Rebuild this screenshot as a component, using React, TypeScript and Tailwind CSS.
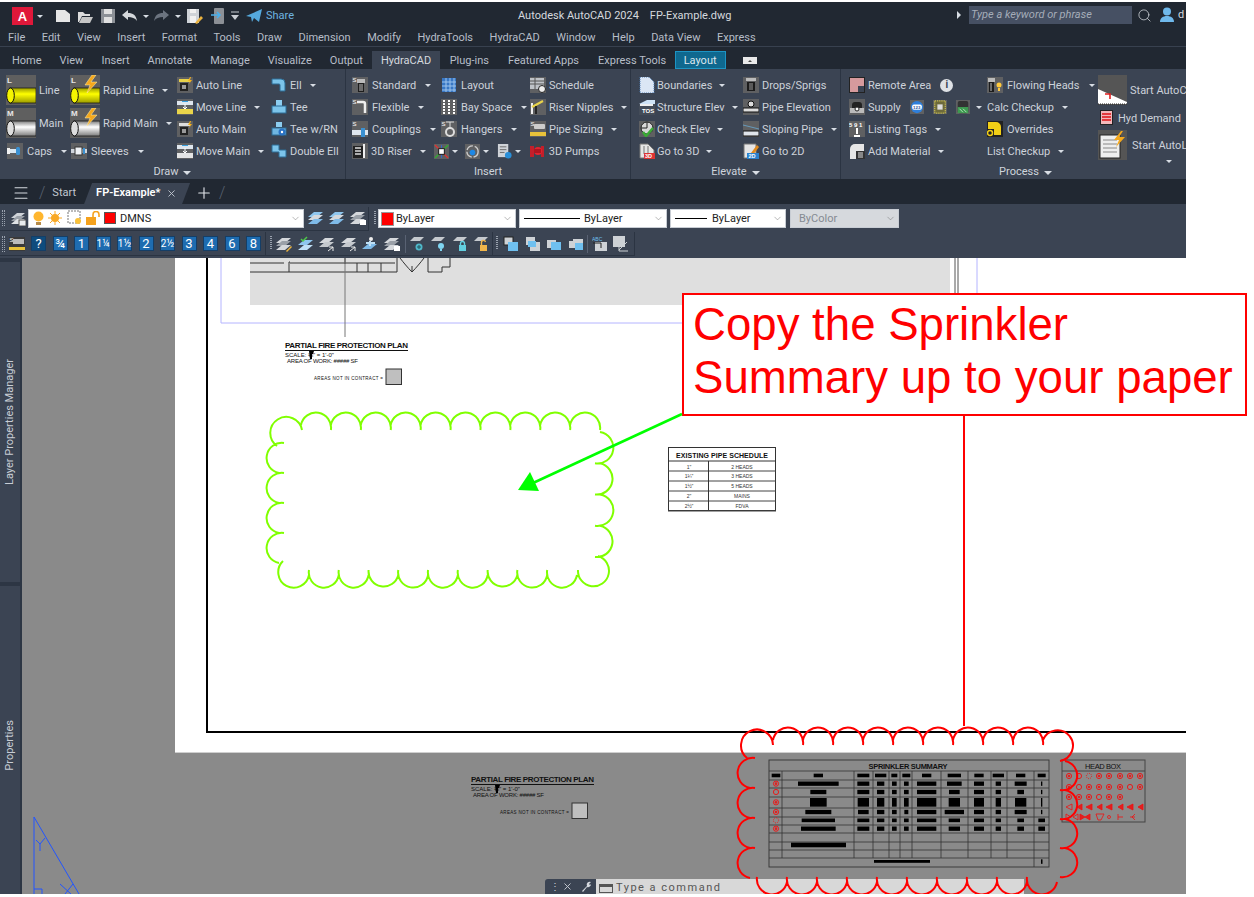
import React from 'react';
import { ChevronDown, Menu, Plus, Search, X } from 'lucide-react';

const G = '#5f6062';

const icons: Record<string, React.ReactNode> = {
  autoLine: (<><rect width="16" height="16" fill={G} /><rect x="2" y="2" width="11" height="3" fill="#e8d24a" /><rect x="3" y="6" width="8" height="8" fill="#222" /><path d="M5 8h4v4H5z" fill="#999" /><path d="M13 0l-2 4h2l-1 3 3-4h-2l1-3z" fill="#f5b21c" /></>),
  autoMain: (<><rect width="16" height="16" fill={G} /><rect x="2" y="2" width="11" height="3" fill="#ddd" /><rect x="3" y="6" width="8" height="8" fill="#222" /><path d="M5 8h4v4H5z" fill="#999" /><path d="M13 0l-2 4h2l-1 3 3-4h-2l1-3z" fill="#f5b21c" /></>),
  moveLine: (<><rect width="16" height="16" fill={G} /><rect x="0" y="2" width="16" height="4" fill="#dfe6ee" /><rect x="0" y="10" width="16" height="5" fill="#e9d44a" /><path d="M5 2h6v1H5z" fill="#38a0e0" /><path d="M8 5v5M6 8l2 2 2-2" stroke="#fff" fill="none" /></>),
  moveMain: (<><rect width="16" height="16" fill={G} /><rect x="0" y="2" width="16" height="4" fill="#dfe6ee" /><rect x="0" y="10" width="16" height="5" fill="#e4e4e4" /><path d="M5 2h6v1H5z" fill="#38a0e0" /><path d="M8 5v5M6 8l2 2 2-2" stroke="#fff" fill="none" /></>),
  ell: (<><path d="M1 2h9a4 4 0 014 4v8H9V8a1 1 0 00-1-1H1z" fill="#7cc4ea" stroke="#2d6d96" /></>),
  tee: (<><rect x="5" y="1" width="6" height="6" fill="#8ccdf0" /><rect x="1" y="7" width="14" height="7" fill="#7cc4ea" stroke="#2d6d96" /></>),
  teeRn: (<><rect x="5" y="1" width="6" height="5" fill="#8ccdf0" /><rect x="1" y="7" width="14" height="7" fill="#6fb6e2" stroke="#2d6d96" /><circle cx="11" cy="11" r="3.5" fill="#2a72c4" /><circle cx="11" cy="11" r="1.2" fill="#fff" /></>),
  doubleEll: (<><path d="M1 2h7v5h7v7H8V9H1z" fill="#7cc4ea" stroke="#2d6d96" /></>),
  caps: (<><rect width="16" height="16" fill={G} /><rect x="0" y="6" width="10" height="4" fill="#dbe8f2" /><rect x="9" y="4" width="4" height="8" rx="1.5" fill="#3b91d2" /><rect x="0" y="5" width="3" height="6" fill="#f2f2f2" /></>),
  sleeves: (<><rect width="16" height="16" fill={G} /><rect x="0" y="6" width="16" height="4" fill="#cfd4da" /><rect x="4" y="4" width="7" height="8" fill="#eef1f4" stroke="#333" /><rect x="12" y="5" width="2" height="6" fill="#3b91d2" /></>),
  standard: (<><rect width="16" height="16" fill={G} /><text x="0.5" y="5" fontSize="6" fill="#fff" fontFamily="Liberation Sans">S</text><rect x="5" y="2" width="8" height="4" fill="#bbb" /><path d="M6 6h6v9H6z" fill="#1d1d1d" /><path d="M8 7v7M10 7v7" stroke="#bbb" /></>),
  flexible: (<><rect width="16" height="16" fill={G} /><text x="0.5" y="5" fontSize="6" fill="#fff" fontFamily="Liberation Sans">S</text><path d="M5 3h6a2 2 0 012 2v9" stroke="#eee" strokeWidth="2.5" fill="none" /></>),
  couplings: (<><rect width="16" height="16" fill={G} /><text x="0.5" y="5" fontSize="6" fill="#fff" fontFamily="Liberation Sans">S</text><rect x="0" y="9" width="16" height="5" fill="#dfe6ee" /><rect x="9" y="7" width="4" height="9" fill="#3b91d2" /></>),
  riser3d: (<><rect width="16" height="16" fill={G} /><path d="M1 3h10v12H1z" fill="#222" /><path d="M3 5h6M3 8h6M3 11h6" stroke="#ddd" strokeWidth="1.5" /><path d="M12 1v14" stroke="#eee" strokeWidth="2" /></>),
  layout: (<><rect x="1" y="1" width="14" height="14" fill="#3877c4" /><path d="M1 5h14M1 9h14M1 13h14M5 1v14M9 1v14M13 1v14" stroke="#9cc4ec" /></>),
  bay: (<><rect width="16" height="16" fill={G} /><path d="M3 1v14M8 1v14M13 1v14" stroke="#fff" strokeWidth="2" strokeDasharray="2 1" /></>),
  hangers: (<><rect width="16" height="16" fill={G} /><text x="0.5" y="5" fontSize="6" fill="#fff" fontFamily="Liberation Sans">S</text><path d="M5 1h8M9 1v7" stroke="#ddd" /><circle cx="9" cy="11" r="4" fill="none" stroke="#ddd" strokeWidth="2" /></>),
  multi: (<><rect width="16" height="16" fill={G} /><path d="M1 1l14 14" stroke="#d33" strokeWidth="1.5" /><path d="M15 1L1 15" stroke="#3a3" strokeWidth="1.5" /><path d="M8 1v14" stroke="#36c" /><rect x="5" y="5" width="6" height="6" fill="#fff" stroke="#111" /></>),
  rotate: (<><rect width="16" height="16" fill={G} /><circle cx="8" cy="8" r="6" fill="none" stroke="#ccc" strokeWidth="1.5" strokeDasharray="8 2" /><circle cx="8" cy="9" r="3" fill="#1e88e5" /></>),
  notes: (<><rect x="1" y="0" width="11" height="14" fill="#cfd3d8" /><path d="M3 3h7M3 6h7M3 9h5" stroke="#666" /><circle cx="12" cy="12" r="3.5" fill="#2a8fd8" /></>),
  schedule: (<><rect width="16" height="16" fill={G} /><rect x="0" y="1" width="14" height="11" fill="#bfc3c8" /><path d="M0 4h14M0 7h14M5 1v11" stroke="#555" /><circle cx="12" cy="12" r="3.5" fill="#eee" stroke="#222" /></>),
  riserNipples: (<><rect width="16" height="16" fill={G} /><path d="M2 15V4" stroke="#eee" strokeWidth="2" /><path d="M2 8l11-6" stroke="#e9d44a" strokeWidth="2" /><path d="M6 15V7" stroke="#111" strokeWidth="1.5" /></>),
  pipeSizing: (<><rect width="16" height="16" fill={G} /><text x="0.5" y="5" fontSize="6" fill="#fff" fontFamily="Liberation Sans">S</text><rect x="4" y="3" width="11" height="5" rx="1" fill="#ccc" /><rect x="0" y="11" width="16" height="4" fill="#e8c23a" /></>),
  pumps: (<><path d="M1 3h4v11H1zM12 3h3v11h-3z" fill="#c31f2a" /><circle cx="9" cy="8" r="4" fill="#e3242f" /><rect x="5" y="6" width="7" height="4" fill="#b01520" /><rect x="7" y="1" width="4" height="3" fill="#444" /></>),
  boundaries: (<><path d="M1 0h9l5 5v11H1z" fill="#dbe6f5" stroke="#4a7ab2" strokeDasharray="1 1" /></>),
  structure: (<><path d="M0 5l8-4h8v4z" fill="#cfe3f6" /><rect x="0" y="5" width="16" height="11" fill="#444c58" /><text x="3" y="14" fontSize="6" fill="#fff" fontFamily="Liberation Sans" fontWeight="700">TOS</text><rect x="1" y="5" width="13" height="2" fill="#eee" /></>),
  check: (<><rect width="16" height="16" fill={G} /><circle cx="8" cy="7" r="6" fill="#d8d8d8" stroke="#222" /><path d="M8 1v6H2" stroke="#222" fill="none" /><path d="M4 11l3 4 7-8" stroke="#3aaa35" strokeWidth="2.5" fill="none" /></>),
  go3d: (<><path d="M1 1h8l6 6v8H1z" fill="#e6e6e6" stroke="#777" /><path d="M5 3v8M9 3v8" stroke="#777" /><rect x="5" y="10" width="11" height="6" fill="#d33" /><text x="6" y="15" fontSize="5.5" fontWeight="700" fill="#fff" fontFamily="Liberation Sans">3D</text></>),
  drops: (<><rect width="16" height="16" fill={G} /><rect x="3" y="1" width="10" height="3" fill="#bbb" /><rect x="4" y="5" width="8" height="9" fill="#1c1c1c" /><path d="M7 6v7M9 6v7" stroke="#999" /></>),
  pipeElev: (<><rect width="16" height="16" fill={G} /><circle cx="8" cy="5" r="3" fill="#ddd" stroke="#111" /><rect x="0" y="9" width="16" height="4" fill="#ddd" stroke="#111" /></>),
  slope: (<><rect width="16" height="16" fill={G} /><path d="M0 4l16 4" stroke="#69b" /><rect x="0" y="10" width="16" height="5" fill="#dfe4ea" stroke="#111" /></>),
  go2d: (<><path d="M1 1h12v14H1z" fill="#e6e6e6" stroke="#777" /><path d="M8 10l6-8 2 2-6 8z" fill="#e08a1e" /><rect x="4" y="10" width="12" height="6" fill="#2a82d0" /><text x="5.5" y="15" fontSize="5.5" fontWeight="700" fill="#fff" fontFamily="Liberation Sans">2D</text></>),
  remote: (<><rect width="16" height="16" fill="#222" /><rect x="1" y="1" width="14" height="14" fill="#d69a9d" /><path d="M9 9h6v6H9z" fill="#3b4453" /></>),
  supply: (<><rect width="16" height="16" fill={G} /><rect x="3" y="3" width="10" height="10" rx="3" fill="#222" /><rect x="1" y="9" width="14" height="5" fill="#bbb" /><circle cx="8" cy="10" r="2" fill="#fff" stroke="#222" /></>),
  one23: (<><rect width="16" height="16" fill={G} /><circle cx="8" cy="8" r="7" fill="#2f7fdb" /><rect x="2.5" y="5" width="11" height="6" rx="2" fill="#fff" /><text x="3.5" y="10" fontSize="5" fill="#1f4f99" fontWeight="700" fontFamily="Liberation Sans">123</text></>),
  plan: (<><rect width="16" height="16" fill={G} /><rect x="2" y="1" width="12" height="14" fill="#6d6a3c" stroke="#f0e14a" strokeDasharray="1.5 1" /><rect x="5" y="5" width="6" height="6" fill="#ddd" /></>),
  tank: (<><rect width="16" height="16" fill={G} /><rect x="2" y="1" width="12" height="14" rx="2" fill="#333" /><rect x="2" y="8" width="12" height="7" fill="#3d9a50" /><path d="M4 10l4 4M8 10l4 4" stroke="#bfe8c4" /></>),
  listing: (<><rect width="16" height="16" fill={G} /><text x="0" y="5.5" fontSize="6" fill="#fff" fontFamily="Liberation Sans" fontWeight="700">5 9 1</text><path d="M8 7v6" stroke="#fff" strokeWidth="2" /><path d="M5 15h6" stroke="#fff" strokeWidth="2" /></>),
  material: (<><path d="M1 16V6a5 5 0 015-5h9v15z" fill="#e6e6e6" /><rect x="7" y="8" width="9" height="8" fill="#333" /><path d="M9 10h5M9 12h5M9 14h5" stroke="#ddd" /></>),
  flowing: (<><rect width="16" height="16" fill={G} /><rect x="1" y="1" width="7" height="4" fill="#bbb" /><rect x="2" y="5" width="5" height="10" fill="#1c1c1c" /><path d="M4 6v8" stroke="#bbb" /><circle cx="12" cy="8" r="2.5" fill="#ffc93c" /><path d="M12 11v3" stroke="#ffc93c" strokeWidth="2" /></>),
  overrides: (<><rect width="16" height="16" fill="#222" /><path d="M1 1h8a5 5 0 015 5v8H7V8H1z" fill="#f2cf16" /><circle cx="3" cy="12" r="2.5" fill="none" stroke="#f2cf16" strokeWidth="1.5" /></>),
  hydDemand: (<><rect x="1" y="0" width="13" height="15" fill="#222" /><rect x="2" y="1" width="11" height="13" fill="#f2b8bb" /><path d="M3 4h9M3 7h9M3 10h9" stroke="#e23b3f" strokeWidth="2" /></>),
  layers: (<><path d="M1 8l6-5h8l-6 5z" fill="#cfd3d8" /><path d="M1 11l6-5h8l-6 5z" fill="#9aa0a8" /><path d="M1 14l6-5h8l-6 5z" fill="#e0e3e6" /><rect x="9" y="10" width="7" height="6" fill="#e9ecef" stroke="#555" /></>),
  stackBlue: (<><path d="M0 7l6-5h9l-6 5z" fill="#8fc6ee" /><path d="M0 10l6-5h9l-6 5z" fill="#d5d8dc" /><path d="M0 14l6-5h9l-6 5z" fill="#7fbbe9" /></>),
  stack: (<><path d="M0 7l6-5h9l-6 5z" fill="#d5d8dc" /><path d="M0 10l6-5h9l-6 5z" fill="#9aa0a8" /><path d="M0 14l6-5h9l-6 5z" fill="#d5d8dc" /><path d="M10 10h6v5h-6z" fill="#fff" /></>),
  stackPen: (<><path d="M0 7l6-5h9l-6 5z" fill="#d5d8dc" /><path d="M0 10l6-5h9l-6 5z" fill="#9aa0a8" /><path d="M0 14l6-5h9l-6 5z" fill="#d5d8dc" /><path d="M10 15l5-5 1 1-5 5z" fill="#ecb33e" /></>),
  stackCheck: (<><path d="M0 9l6-5h9l-6 5z" fill="#8fc6ee" /><path d="M0 14l6-5h9l-6 5z" fill="#bfe0f6" /><path d="M3 3l2 2 4-4" stroke="#4ec94a" strokeWidth="1.5" fill="none" /></>),
  stackArrow: (<><path d="M0 7l6-5h9l-6 5z" fill="#d5d8dc" /><path d="M0 11l6-5h9l-6 5z" fill="#c5c9ce" /><path d="M9 15l5-4M14 15v-4h-4" stroke="#eee" fill="none" /></>),
  stackMan: (<><path d="M0 13l6-5h9l-6 5z" fill="#7fbbe9" /><circle cx="9" cy="3" r="2" fill="#eee" /><path d="M4 7h9M8 5v5" stroke="#bfe0f6" strokeWidth="2" /></>),
  flatSnow: (<><path d="M1 5l4-4h10l-4 4z" fill="#c5c9ce" /><circle cx="10" cy="11" r="3.5" fill="#4fb7c9" /><path d="M8 11h4M10 9v4" stroke="#22525c" /></>),
  flatBulb: (<><path d="M1 5l4-4h10l-4 4z" fill="#c5c9ce" /><circle cx="11" cy="10" r="3" fill="#7fd5f2" /><rect x="10" y="13" width="2" height="2" fill="#7fd5f2" /></>),
  flatLock: (<><path d="M1 5l4-4h10l-4 4z" fill="#c5c9ce" /><rect x="7" y="9" width="7" height="6" fill="#62cfe0" /><path d="M8.5 9V7.5a2 2 0 014 0V9" stroke="#62cfe0" fill="none" strokeWidth="1.4" /></>),
  flatUnlock: (<><path d="M1 5l4-4h10l-4 4z" fill="#c5c9ce" /><rect x="7" y="9" width="7" height="6" fill="#f1b54a" /><path d="M8.5 9V7a2 2 0 014-1" stroke="#f1b54a" fill="none" strokeWidth="1.4" /></>),
  order1: (<><rect x="1" y="1" width="9" height="8" fill="#ced2d6" stroke="#222" /><rect x="5" y="6" width="10" height="9" fill="#6fc0f0" /></>),
  order2: (<><rect x="5" y="6" width="10" height="9" fill="#ced2d6" /><rect x="1" y="1" width="9" height="8" fill="#ced2d6" /><rect x="3" y="5" width="8" height="6" fill="#6fc0f0" /></>),
  order3: (<><rect x="1" y="4" width="9" height="8" fill="#ced2d6" /><rect x="5" y="6" width="10" height="8" fill="#6fc0f0" /></>),
  order4: (<><rect x="5" y="3" width="10" height="8" fill="#ced2d6" /><rect x="1" y="5" width="9" height="7" fill="#ced2d6" /><rect x="7" y="7" width="8" height="7" fill="#6fc0f0" /></>),
  textFront: (<><text x="0" y="5" fontSize="5" fill="#6fc0f0" fontFamily="Liberation Sans">ABC</text><rect x="3" y="6" width="12" height="9" fill="#ced2d6" /><path d="M1 7h8v5" stroke="#222" fill="none" /></>),
  dimFront: (<><rect x="0" y="0" width="12" height="11" fill="#ced2d6" /><path d="M6 14l8-8M6 7v8h9" stroke="#ced2d6" fill="none" /></>),
  tape: (<><rect x="0" y="1" width="16" height="14" fill="#3a3a3a" /><text x="0.5" y="6" fontSize="6" fill="#fff" fontFamily="Liberation Sans">S</text><rect x="4" y="3" width="11" height="5" fill="#bbb" /><rect x="0" y="11" width="16" height="3" fill="#e8c23a" /></>),
};

function Ico({ n, s = 16 }: { n: string; s?: number }) {
  return (
    <svg width={s} height={s} viewBox="0 0 16 16" className="shrink-0">
      {icons[n]}
    </svg>
  );
}

function Caret({ className = 'ml-[5px]' }: { className?: string }) {
  return <span className={`inline-block shrink-0 w-0 h-0 border-x-[3px] border-x-transparent border-t-[3px] border-t-[#d8dde4] ${className}`} />;
}

function Label({ children }: { children: React.ReactNode }) {
  return <span className="relative top-px">{children}</span>;
}

function Item({ icon, label, caret, gap = 'gap-[3px]' }: { icon?: string; label?: string; caret?: boolean; gap?: string }) {
  return (
    <div className={`flex items-center h-[22px] whitespace-nowrap ${gap}`}>
      {icon && <Ico n={icon} />}
      {label && <Label>{label}</Label>}
      {caret && <Caret />}
    </div>
  );
}

function BigPipe({ letter, color, bolt }: { letter: string; color: string; bolt?: boolean }) {
  const dark = color === '#ffff00' ? '#9b9b00' : '#7d7d7d';
  const id = `pipe${letter}${bolt ? 'b' : ''}`;
  return (
    <svg width="30" height="30" viewBox="0 0 30 30" className="shrink-0">
      <defs>
        <linearGradient id={id} x1="0" y1="0" x2="0" y2="1">
          <stop offset="0" stopColor={dark} />
          <stop offset="0.4" stopColor={color === '#ffff00' ? '#ffff00' : '#ffffff'} />
          <stop offset="1" stopColor={dark} />
        </linearGradient>
      </defs>
      <rect width="30" height="30" fill="#5f5f5f" />
      <text x="1" y="8" fontSize="8" fontWeight="700" fill="#e8e8e8" fontFamily="Liberation Sans">{letter}</text>
      <rect x="4" y="13" width="26" height="15" fill={`url(#${id})`} stroke="#111" strokeWidth="0.7" />
      <ellipse cx="4.5" cy="20.5" rx="3.8" ry="7.5" fill={color === '#ffff00' ? '#f5f500' : '#dddddd'} stroke="#111" />
      {bolt && <path d="M22 0l-7 10h5l-3 8 10-11h-6l5-7z" fill="#f5a81c" stroke="#fff1b0" strokeWidth="0.5" />}
    </svg>
  );
}

function PanelLabel({ label, caret, shift = '' }: { label: string; caret?: boolean; shift?: string }) {
  return (
    <div className={`absolute left-0 right-0 bottom-0 h-[13px] flex items-center justify-center text-[#cfd4dc] ${shift}`}>
      <span>{label}</span>
      {caret && <span className="inline-block ml-[5px] w-0 h-0 border-x-[4px] border-x-transparent border-t-[4px] border-t-[#d8dde4]" />}
    </div>
  );
}

function Ribbon() {
  return (
    <div className="h-[110px] bg-[#3b4453] flex text-[11px] text-[#cdd2da] relative">
      {/* Draw */}
      <div className="relative w-[346px] shrink-0 pl-[6px] pt-[5px] flex border-r border-[#2b3442]">
        <div className="w-[64px] shrink-0">
          <div className="flex items-center gap-[3px] h-[32px]"><BigPipe letter="L" color="#ffff00" /><Label>Line</Label></div>
          <div className="flex items-center gap-[3px] h-[34px]"><BigPipe letter="M" color="#ffffff" /><Label>Main</Label></div>
          <div className="pl-[1px]"><Item icon="caps" label="Caps" caret gap="gap-[4px]" /></div>
        </div>
        <div className="w-[107px] shrink-0">
          <div className="flex items-center gap-[3px] h-[32px]"><BigPipe letter="L" color="#ffff00" bolt /><Label>Rapid Line</Label><Caret /></div>
          <div className="flex items-center gap-[3px] h-[34px]"><BigPipe letter="M" color="#ffffff" bolt /><Label>Rapid Main</Label><Caret /></div>
          <div className="pl-[1px]"><Item icon="sleeves" label="Sleeves" caret gap="gap-[4px]" /></div>
        </div>
        <div className="w-[94px] shrink-0">
          <Item icon="autoLine" label="Auto Line" />
          <Item icon="moveLine" label="Move Line" caret />
          <Item icon="autoMain" label="Auto Main" />
          <Item icon="moveMain" label="Move Main" caret />
        </div>
        <div>
          <Item icon="ell" label="Ell" caret />
          <Item icon="tee" label="Tee" />
          <Item icon="teeRn" label="Tee w/RN" />
          <Item icon="doubleEll" label="Double Ell" />
        </div>
        <PanelLabel label="Draw" caret />
      </div>

      {/* Insert */}
      <div className="relative w-[285px] shrink-0 pl-[6px] pt-[5px] border-r border-[#2b3442]">
        <div className="grid grid-cols-[89px_89px_1fr]">
          <Item icon="standard" label="Standard" caret gap="gap-[4px]" />
          <Item icon="layout" label="Layout" gap="gap-[4px]" />
          <Item icon="schedule" label="Schedule" />
          <Item icon="flexible" label="Flexible" caret gap="gap-[4px]" />
          <Item icon="bay" label="Bay Space" caret gap="gap-[4px]" />
          <Item icon="riserNipples" label="Riser Nipples" caret />
          <Item icon="couplings" label="Couplings" caret gap="gap-[4px]" />
          <Item icon="hangers" label="Hangers" caret gap="gap-[4px]" />
          <Item icon="pipeSizing" label="Pipe Sizing" caret />
        </div>
        <div className="flex items-center h-[22px]">
          <Item icon="riser3d" label="3D Riser" caret />
          <span className="ml-[8px]"><Ico n="multi" s={15} /></span>
          <Caret className="ml-[3px]" />
          <span className="ml-[7px]"><Ico n="rotate" s={15} /></span>
          <Caret className="ml-[3px]" />
          <span className="ml-[8px]"><Ico n="notes" s={15} /></span>
          <Caret className="ml-[3px]" />
          <div className="ml-[8px]"><Item icon="pumps" label="3D Pumps" gap="gap-[4px]" /></div>
        </div>
        <PanelLabel label="Insert" />
      </div>

      {/* Elevate */}
      <div className="relative w-[210px] shrink-0 pl-[8px] pt-[5px] flex border-r border-[#2b3442]">
        <div className="w-[104px] shrink-0">
          <Item icon="boundaries" label="Boundaries" caret gap="gap-[2px]" />
          <Item icon="structure" label="Structure Elev" caret gap="gap-[2px]" />
          <Item icon="check" label="Check Elev" caret gap="gap-[2px]" />
          <Item icon="go3d" label="Go to 3D" caret gap="gap-[2px]" />
        </div>
        <div>
          <Item icon="drops" label="Drops/Sprigs" />
          <Item icon="pipeElev" label="Pipe Elevation" />
          <Item icon="slope" label="Sloping Pipe" caret />
          <Item icon="go2d" label="Go to 2D" />
        </div>
        <PanelLabel label="Elevate" caret />
      </div>

      {/* Process */}
      <div className="relative flex-1 pl-[8px] pt-[5px] flex overflow-hidden">
        <div className="w-[138px] shrink-0">
          <div className="flex items-center h-[22px] gap-[3px]">
            <Ico n="remote" /><Label>Remote Area</Label>
            <span className="ml-[6px] w-[13px] h-[13px] rounded-full bg-[#dfe2e6] text-[#3b4453] flex items-center justify-center text-[10px] font-bold leading-none">i</span>
          </div>
          <div className="flex items-center h-[22px] gap-[3px]">
            <Ico n="supply" /><Label>Supply</Label>
            <span className="ml-[6px]"><Ico n="one23" s={14} /></span>
            <span className="ml-[6px]"><Ico n="plan" s={14} /></span>
            <span className="ml-[6px]"><Ico n="tank" s={14} /></span>
            <Caret className="ml-[3px]" />
          </div>
          <Item icon="listing" label="Listing Tags" caret />
          <Item icon="material" label="Add Material" caret />
        </div>
        <div className="w-[111px] shrink-0">
          <Item icon="flowing" label="Flowing Heads" caret gap="gap-[4px]" />
          <Item label="Calc Checkup" caret />
          <Item icon="overrides" label="Overrides" gap="gap-[4px]" />
          <Item label="List Checkup" caret />
        </div>
        <div className="whitespace-nowrap">
          <div className="flex items-center gap-[3px] h-[32px]">
            <svg width="29" height="30" viewBox="0 0 29 30" className="shrink-0">
              <rect width="29" height="30" fill="#555" />
              <path d="M0 14l29 13v2H0z" fill="#fff" />
              <path d="M0 29h29" stroke="#222" strokeDasharray="1 1" />
              <path d="M7 19h5v5" stroke="#e02020" strokeWidth="1.6" fill="none" />
            </svg>
            <Label>Start AutoCalc</Label>
          </div>
          <div className="flex items-center gap-[3px] h-[24px] pl-[1px]"><Ico n="hydDemand" /><Label>Hyd Demand</Label></div>
          <div className="relative flex items-center gap-[5px] h-[30px]">
            <svg width="29" height="30" viewBox="0 0 29 30" className="shrink-0">
              <rect width="29" height="30" fill="#555" />
              <rect x="2" y="5" width="20" height="23" fill="#eee" stroke="#222" />
              <path d="M5 10h14M5 14h14M5 18h14M5 22h14" stroke="#888" />
              <path d="M23 1l-7 9h5l-3 7 9-10h-6l4-6z" fill="#f5a81c" />
            </svg>
            <Label>Start AutoLoad</Label>
            <span className="absolute left-[68px] top-[22px]"><Caret className="" /></span>
          </div>
        </div>
        <PanelLabel label="Process" caret shift="pl-[24px]" />
      </div>
    </div>
  );
}

function Grip() {
  return <span className="w-[3px] h-[16px] border-x border-dotted border-[#9aa2ae] shrink-0" />;
}

function Combo({ width, children, muted }: { width: string; children: React.ReactNode; muted?: boolean }) {
  return (
    <div className={`${width} h-[19px] shrink-0 flex items-center relative border border-[#c8cdd4] ${muted ? 'bg-[#d6d9dd] text-[#858a92]' : 'bg-white text-[#222]'}`}>
      {children}
      <ChevronDown size={11} strokeWidth={1} className="absolute right-[2px] top-[3px] text-[#666]" />
    </div>
  );
}

function TopToolbar() {
  return (
    <div className="h-[28px] pt-[1px] bg-[#3b4453] flex items-center text-[11px]">
      <div className="flex items-center h-[24px] w-[369px] pl-[2px] border-r border-b border-[#2b3442]">
        <Grip />
        <span className="ml-[5px]"><Ico n="layers" /></span>
        <div className="ml-[2px]">
          <Combo width="w-[276px]">
            <span className="ml-[3px] flex items-center gap-[3px]">
              <svg width="13" height="15" viewBox="0 0 13 15"><circle cx="6.5" cy="5.5" r="5" fill="#ffb62e" /><rect x="4" y="11" width="5" height="3" fill="#b58b4a" /></svg>
              <svg width="14" height="14" viewBox="0 0 14 14"><circle cx="7" cy="7" r="4" fill="#f9a825" /><path d="M7 0v14M0 7h14M2 2l10 10M12 2L2 12" stroke="#f9a825" /></svg>
              <svg width="16" height="16" viewBox="0 0 16 16" className="ml-[2px]"><rect x="1" y="1" width="12" height="12" fill="none" stroke="#777" strokeDasharray="2 1" /><circle cx="11" cy="11" r="3" fill="#f9c13a" /></svg>
              <svg width="15" height="15" viewBox="0 0 15 15"><rect x="0" y="6" width="10" height="8" fill="#f5a21e" /><path d="M7 6V3.5a3 3 0 016 0V6" fill="none" stroke="#f5a21e" strokeWidth="1.6" /></svg>
              <span className="w-[12px] h-[12px] bg-[#ff0000] border border-[#555]" />
            </span>
            <span className="ml-[4px] relative top-px">DMNS</span>
          </Combo>
        </div>
        <span className="ml-[4px]"><Ico n="stackBlue" /></span>
        <span className="ml-[5px]"><Ico n="stackBlue" /></span>
        <span className="ml-[5px]"><Ico n="stack" /></span>
      </div>
      <div className="ml-[5px]"><Grip /></div>
      <div className="ml-[2px]">
        <Combo width="w-[138px]">
          <span className="ml-[2px] w-[13px] h-[14px] bg-[#ff0000] border border-[#999]" />
          <span className="ml-[2px] relative top-px">ByLayer</span>
        </Combo>
      </div>
      <div className="ml-[3px]">
        <Combo width="w-[148px]">
          <span className="ml-[4px] w-[56px] h-px bg-black" />
          <span className="ml-[4px] relative top-px">ByLayer</span>
        </Combo>
      </div>
      <div className="ml-[3px]">
        <Combo width="w-[116px]">
          <span className="ml-[4px] w-[32px] h-[1.5px] bg-black" />
          <span className="ml-[5px] relative top-px">ByLayer</span>
        </Combo>
      </div>
      <div className="ml-[4px]">
        <Combo width="w-[109px]" muted>
          <span className="ml-[8px] relative top-px">ByColor</span>
        </Combo>
      </div>
    </div>
  );
}

const sizes = ['?', '¾', '1', '1¼', '1½', '2', '2½', '3', '4', '6', '8'];

function BottomToolbar() {
  return (
    <div className="h-[26px] bg-[#3b4453] flex items-start text-[11px]">
      <div className="flex items-center h-[24px] w-[635px] pl-[2px] border-r border-b border-[#2b3442]">
        <Grip />
        <span className="ml-[4px]"><Ico n="tape" /></span>
        <div className="ml-[6px] flex gap-[6.5px]">
          {sizes.map((s, i) => (
            <span key={s} className={`w-[15px] h-[15px] flex items-center justify-center leading-none text-white border border-[#153e66] ${i === 0 ? 'bg-[#0f4c7d]' : 'bg-[#1e6cb0]'} ${s.length > 1 ? 'text-[10px]' : 'text-[13px]'}`}>{s}</span>
          ))}
        </div>
        <span className="ml-[4px] h-[24px] border-r border-[#2b3442]" />
        <span className="ml-[4px]"><Grip /></span>
        <div className="ml-[4px] flex gap-[5.5px]">
          {['stackPen', 'stackCheck', 'stackArrow', 'stackArrow', 'stackMan', 'stack'].map((n, i) => <Ico key={i} n={n} />)}
        </div>
        <span className="ml-[5px] h-[18px] border-r border-[#596273]" />
        <div className="ml-[3px] flex gap-[5.5px]">
          {['flatSnow', 'flatBulb', 'flatLock', 'flatUnlock'].map((n) => <Ico key={n} n={n} />)}
        </div>
        <span className="ml-[3px] h-[24px] border-r border-[#2b3442]" />
        <span className="ml-[3px]"><Grip /></span>
        <div className="ml-[5px] flex gap-[5.5px]">
          {['order1', 'order2', 'order3', 'order4'].map((n) => <Ico key={n} n={n} />)}
        </div>
        <span className="ml-[3px] h-[18px] border-r border-[#596273]" />
        <div className="ml-[4px] flex gap-[5px]">
          <Ico n="textFront" /><Ico n="dimFront" />
        </div>
      </div>
    </div>
  );
}

// one side of a revision cloud: overlapping half circles that end in a small hook
function cloudSide(ax: number, ay: number, bx: number, by: number, count: number) {
  const len = Math.hypot(bx - ax, by - ay);
  const ux = (bx - ax) / len;
  const uy = (by - ay) / len;
  const nx = uy;
  const ny = -ux;
  const step = len / count;
  const r = Math.hypot(step, 5) / 2;
  let d = '';
  for (let i = 0; i < count; i++) {
    const sx = ax + ux * step * i + nx * 5;
    const sy = ay + uy * step * i + ny * 5;
    const ex = ax + ux * step * (i + 1);
    const ey = ay + uy * step * (i + 1);
    d += `M${sx.toFixed(1)} ${sy.toFixed(1)}A${r.toFixed(2)} ${r.toFixed(2)} 0 0 1 ${ex.toFixed(1)} ${ey.toFixed(1)}`;
  }
  return d;
}

function PlanNote({ dx = 0, dy = 0, ink = '#111' }: { dx?: number; dy?: number; ink?: string }) {
  return (
    <g transform={`translate(${dx} ${dy})`} fontFamily="Liberation Sans" fill={ink}>
      <text x="285" y="348" fontSize="8" fontWeight="700" textLength="123">PARTIAL FIRE PROTECTION PLAN</text>
      <path d="M285 350.5h123" stroke={ink} strokeWidth="1" />
      <text x="285" y="357" fontSize="6" textLength="49">SCALE: ⅛" = 1'-0"</text>
      <path d="M309 351h5l-1 3h-1v5h-2z" fill="#000" />
      <text x="287" y="363" fontSize="6" textLength="71">AREA OF WORK: ##### SF</text>
      <text x="314" y="380" fontSize="4.5" textLength="69">AREAS NOT IN CONTRACT =</text>
      <rect x="386" y="369" width="15.5" height="15.5" fill="#bfbfbf" stroke="#333" strokeWidth="1" />
    </g>
  );
}

// sprinkler symbol: a red ring, with a dot in it unless it is an open head
function Head({ x, y, open, dashed }: { x: number; y: number; open?: boolean; dashed?: boolean }) {
  return (
    <g>
      <circle cx={x} cy={y} r="2.6" fill="none" stroke="#f01010" strokeWidth="0.9" strokeDasharray={dashed ? '1 1' : undefined} />
      {!open && <circle cx={x} cy={y} r="1.3" fill="#e02020" />}
    </g>
  );
}

const colCentres = [138, 265, 400, 452, 493, 529, 590, 673, 747, 805, 872, 935];
const rows: { y: number; h: number; w: number[] }[] = [
  { y: 191, h: 13, w: [0, 122, 36, 22, 14, 14, 58, 44, 30, 16, 36, 4] },
  { y: 216, h: 13, w: [0, 48, 36, 22, 14, 14, 58, 32, 30, 16, 20, 4] },
  { y: 247, h: 26, w: [0, 50, 34, 22, 14, 14, 58, 34, 30, 16, 34, 4] },
  { y: 276, h: 13, w: [0, 78, 32, 22, 14, 12, 58, 58, 30, 16, 36, 4] },
  { y: 301, h: 11, w: [0, 100, 36, 22, 14, 14, 58, 34, 30, 16, 20, 20] },
  { y: 326, h: 13, w: [0, 104, 36, 22, 14, 14, 58, 34, 30, 16, 20, 20] },
];
const headerWidths = [26, 28, 36, 34, 18, 24, 28, 40, 28, 34, 28, 24];
const hLines = [771, 780, 788, 797, 808, 817, 825, 833, 842, 850, 858];
const vLines = [782, 854, 873, 889, 900, 912, 941, 968, 991, 1007, 1034];

function SprinklerSummary() {
  const px = (z: number) => 730 + z / 3;
  const py = (z: number) => 720 + z / 3;
  return (
    <g>
      <rect x="769" y="760" width="280" height="107" fill="none" stroke="#333" strokeWidth="0.9" />
      <text x="908" y="769" fontSize="7.5" fontWeight="700" textAnchor="middle" fontFamily="Liberation Sans" fill="#111" textLength="79">SPRINKLER SUMMARY</text>
      {hLines.map((y) => <path key={y} d={`M769 ${y}h280`} stroke="#333" strokeWidth="0.8" />)}
      {vLines.map((x, i) => <path key={x} d={`M${x} 771V${i === 10 ? 867 : 858}`} stroke="#333" strokeWidth="0.8" />)}
      {headerWidths.map((w, i) => <rect key={i} x={px(colCentres[i] - w / 2)} y={py(161)} width={w / 3} height={3.6} fill="#000" />)}
      {rows.map((r, ri) => (
        <g key={ri}>
          {r.w.map((w, i) => w > 0 && <rect key={i} x={px(colCentres[i] - w / 2)} y={py(r.y - r.h / 2)} width={w / 3} height={r.h / 3} fill="#000" />)}
          <Head x={px(138)} y={py(r.y)} open={ri === 1 || ri === 4} dashed={ri === 4} />
        </g>
      ))}
      <rect x={px(183)} y={py(368)} width="55" height="4.6" fill="#000" />
      <rect x={px(432)} y={py(420)} width="56" height="2.8" fill="#000" />
      <rect x={px(933)} y={py(418)} width="1.5" height="4.5" fill="#000" />
    </g>
  );
}

const headX = [1069, 1079, 1089, 1099, 1109, 1120, 1130, 1140];

function HeadBox() {
  return (
    <g>
      <rect x="1062" y="760" width="83" height="62" fill="none" stroke="#444" />
      <path d="M1062 771h83" stroke="#444" />
      <text x="1103" y="769" fontSize="7.5" textAnchor="middle" fontFamily="Liberation Sans" fill="#111" textLength="36">HEAD BOX</text>
      {headX.map((x, i) => <Head key={x} x={x} y={776} open={i === 1 || i === 2} dashed={i === 2} />)}
      {headX.map((x, i) => <Head key={x} x={x} y={787} open={i === 1 || i === 6} />)}
      {headX.slice(0, 6).map((x, i) => <Head key={x} x={x} y={797} open={i === 3} />)}
      <g fill="#e02020" stroke="#f01010" strokeWidth="0.8">
        {headX.map((x, i) => <path key={x} d={`M${x + 3} 804v6l-${i % 2 ? 5 : 6} -3z`} fill={i < 1 ? 'none' : '#e02020'} />)}
        <path d="M1066 814v6l5-3zM1078 814v6l-5-3z" fill="none" />
        <path d="M1080 814v6l5-3 5 3v-6l-5 3z" />
        <path d="M1096 814h8l-3 6h-3z" fill="none" />
        <circle cx="1109" cy="817" r="1.5" fill="none" />
        <path d="M1118 814v6M1118 817h5M1130 817h5M1135 814l-3 3 3 3" fill="none" />
      </g>
    </g>
  );
}

const pipeRows = [['1"', '2 HEADS'], ['1¼"', '3 HEADS'], ['1½"', '5 HEADS'], ['2"', 'MAINS'], ['2½"', 'FDVA']];

function Drawing() {
  const green = [
    'M277 446A16 16 0 1 1 302 430',
    cloudSide(301, 430, 600, 430, 10),
    cloudSide(595, 432, 595, 557, 4),
    'M598 556A15.5 15.5 0 1 1 578 570',
    cloudSide(577, 570, 309, 570, 9),
    'M309 575A15.5 15.5 0 1 1 283 561',
    cloudSide(284, 563, 284, 443, 4),
  ].join('');
  const red = [
    'M747 758A16 16 0 1 1 773 745',
    cloudSide(773, 745, 1043, 745, 9),
    'M1043 740A15.5 15.5 0 1 1 1060 761',
    cloudSide(1060, 761, 1060, 877, 4),
    cloudSide(1057, 877, 757, 877, 10),
    cloudSide(755, 878, 755, 758, 4),
  ].join('');
  return (
    <svg width="1164" height="636" viewBox="22 258 1164 636" className="absolute left-0 top-0">
      <rect x="175" y="258" width="1011" height="494" fill="#fff" />
      <path d="M175 752.5h1011" stroke="#cfcfcf" />
      <rect x="250" y="258" width="700" height="47" fill="#dfdfdf" />
      <path d="M221 258v65h756V258" fill="none" stroke="#b4b4ff" />
      <path d="M955 258v37M958 258v37" stroke="#555" />
      <path d="M250 263h34M250 272h147V258M290 262h-1v10M290 263h105M357 263v9M368 263v9M381 263v9M345 258v6" fill="none" stroke="#333" />
      <path d="M400 258c3 4 8 10 12 14 4-4 9-10 12-14M412 266v6M428 258v14h14v-5h8v-9" fill="none" stroke="#333" />
      <path d="M345 258v79" stroke="#777" />
      <path d="M207 258v474h979" fill="none" stroke="#000" strokeWidth="2" />
      <PlanNote />

      <path d={green} fill="none" stroke="#80ff00" strokeWidth="2" />

      <rect x="668.5" y="447.5" width="107" height="63" fill="#fff" stroke="#333" />
      <text x="722" y="458" fontSize="7" fontWeight="700" textAnchor="middle" fontFamily="Liberation Sans" fill="#111" textLength="92">EXISTING PIPE SCHEDULE</text>
      <path d="M668 461h108" stroke="#333" />
      {pipeRows.map(([size, use], i) => (
        <g key={size} fontFamily="Liberation Sans" fontSize="5" fill="#333" textAnchor="middle">
          <path d={`M668 ${471 + i * 10}h108`} stroke="#444" />
          <text x="689" y={468.5 + i * 9.9}>{size}</text>
          <text x="742" y={468.5 + i * 9.9}>{use}</text>
        </g>
      ))}
      <path d="M708.5 461v49" stroke="#333" />

      <path d="M34 817v77M34 817l45 77M36 840l4 4 5-6M40 844v7M34 889h8v5M60 884l11 10M73 884l-8 10" fill="none" stroke="#2255ff" />
      <PlanNote dx={186} dy={434} />
      <SprinklerSummary />
      <HeadBox />
      <path d={red} fill="none" stroke="#ff0000" strokeWidth="2" />
    </svg>
  );
}

export default function App() {
  return (
    <div className="relative w-[1254px] h-[897px] bg-white overflow-hidden font-['Roboto',sans-serif]">
      <div className="w-[1186px] h-[892px] mt-[2px] flex flex-col overflow-hidden">
        {/* title bar */}
        <div className="h-[28px] shrink-0 bg-[#212832] flex items-center text-[11px] text-[#d5d9df] relative">
          <div className="ml-[12px] w-[21px] h-[18px] bg-[#e0183a] text-white font-bold text-[13px] leading-none flex items-center justify-center font-['Liberation_Sans',sans-serif]">A</div>
          <Caret className="ml-[4px]" />
          <svg width="16" height="16" viewBox="0 0 16 16" className="ml-[12px]"><path d="M1 2h9l5 4v8H1z" fill="#e6e6e6" /></svg>
          <svg width="16" height="16" viewBox="0 0 16 16" className="ml-[6px]"><path d="M1 4h5l2 2h5v2H5l-3 6H1z" fill="#dcdcdc" /><path d="M5 9h11l-3 6H2z" fill="#c6c6c6" /></svg>
          <svg width="16" height="16" viewBox="0 0 16 16" className="ml-[7px]"><path d="M1 1h14v14H1z" fill="#8c9096" /><rect x="4" y="1" width="8" height="5" fill="#e0e0e0" /><rect x="4" y="9" width="8" height="6" fill="#e0e0e0" /></svg>
          <svg width="15" height="14" viewBox="0 0 15 14" className="ml-[6px]"><path d="M0 6l6-5v3c5 0 8 2 9 8-2-3-5-4-9-4v3z" fill="#d5d8dc" /></svg>
          <Caret className="ml-[6px]" />
          <svg width="15" height="14" viewBox="0 0 15 14" className="ml-[5px]"><path d="M15 6L9 1v3C4 4 1 6 0 12c2-3 5-4 9-4v3z" fill="#6c7480" /></svg>
          <Caret className="ml-[6px]" />
          <svg width="16" height="16" viewBox="0 0 16 16" className="ml-[6px]"><path d="M0 1h12v14H0z" fill="#cfd3d8" /><rect x="3" y="1" width="6" height="4" fill="#f0f0f0" /><rect x="3" y="8" width="6" height="7" fill="#f0f0f0" /><path d="M8 15l6-7 2 2-6 6z" fill="#ecb33e" /></svg>
          <svg width="16" height="16" viewBox="0 0 16 16" className="ml-[8px]"><rect x="3" y="0" width="10" height="16" rx="1" fill="#8c9096" /><path d="M0 7h8M6 4l3 3-3 3" stroke="#49b0ee" strokeWidth="1.5" fill="none" /></svg>
          <svg width="10" height="10" viewBox="0 0 10 10" className="ml-[3px]"><path d="M1 1h8" stroke="#c8ccd2" /><path d="M1 4h8L5 9z" fill="#c8ccd2" /></svg>
          <svg width="16" height="14" viewBox="0 0 16 14" className="ml-[6px]"><path d="M0 7L16 0l-3 13-5-4-2 4-1-5z" fill="#55a9dd" /></svg>
          <span className="ml-[4px] text-[#6fb4e0]">Share</span>
          <span className="absolute left-[518px] top-[6px] whitespace-pre">Autodesk AutoCAD 2024    FP-Example.dwg</span>
          <div className="absolute left-[957px] top-[4px] flex items-center">
            <span className="w-0 h-0 border-y-[4px] border-y-transparent border-l-[4px] border-l-[#d8dde4]" />
            <div className="ml-[8px] w-[163px] h-[18px] bg-[#465063] pl-[2px] italic text-[#a5adb9] leading-[18px] overflow-hidden">Type a keyword or phrase</div>
            <Search size={15} strokeWidth={1.2} className="ml-[5px] text-[#d5d9df]" />
            <svg width="16" height="16" viewBox="0 0 16 16" className="ml-[7px]"><circle cx="8" cy="4.5" r="4" fill="#6fb9ec" /><path d="M1 15c0-4 3-6 7-6s7 2 7 6z" fill="#6fb9ec" /></svg>
            <span className="ml-[3px]">d</span>
          </div>
        </div>

        {/* menu bar */}
        <div className="h-[17px] pt-px shrink-0 bg-[#212832] border-b border-[#38414f] pl-[8px] flex items-center gap-[16.5px] text-[11px] text-[#b7bec8]">
          {['File', 'Edit', 'View', 'Insert', 'Format', 'Tools', 'Draw', 'Dimension', 'Modify', 'HydraTools', 'HydraCAD', 'Window', 'Help', 'Data View', 'Express'].map((m) => <span key={m}>{m}</span>)}
        </div>

        {/* ribbon tabs */}
        <div className="h-[22px] shrink-0 bg-[#212832] pl-[3px] pt-[4px] flex text-[11px] text-[#b7bec8] relative">
          {['Home', 'View', 'Insert', 'Annotate', 'Manage', 'Visualize', 'Output'].map((t) => <span key={t} className="px-[9px] leading-[20px]">{t}</span>)}
          <span className="px-[9px] leading-[20px] bg-[#3b4453] text-[#d5d9df]">HydraCAD</span>
          {['Plug-ins', 'Featured Apps', 'Express Tools'].map((t) => <span key={t} className="px-[9.5px] leading-[20px]">{t}</span>)}
          <span className="-ml-[1px] px-[8px] leading-[18px] h-[18px] bg-[#0f688f] border border-[#1c94c4] text-[#dce6ee]">Layout</span>
          <span className="absolute left-[743px] top-[10px] w-[14px] h-[7px] bg-[#e8e8e8] flex items-center justify-center">
            <span className="w-0 h-0 border-x-[2px] border-x-transparent border-b-[2px] border-b-[#444]" />
          </span>
        </div>

        <Ribbon />

        {/* document tabs */}
        <div className="h-[25px] pt-[3px] shrink-0 bg-[#212832] flex items-center text-[11px] text-[#c2c8d1] relative">
          <Menu size={18} strokeWidth={1.4} className="ml-[12px] text-[#d5d9df]" />
          <span className="ml-[9px] text-[#58616f] text-[16px] font-light">/</span>
          <span className="ml-[7px]">Start</span>
          <div className="ml-[8px] self-end h-[21px] w-[106px] bg-[#3b4453] [clip-path:polygon(8px_0,100%_0,calc(100%-8px)_100%,0_100%)] flex items-center pl-[12px] text-white font-semibold">
            <span>FP-Example*</span>
            <X size={11} strokeWidth={2} className="ml-[6px] text-[#c2c8d1]" />
          </div>
          <Plus size={18} strokeWidth={1.5} className="ml-[5px] text-[#e2e5e9]" />
          <span className="ml-[6px] text-[#58616f] text-[16px] font-light">/</span>
        </div>

        <TopToolbar />
        <BottomToolbar />

        <div className="flex-1 flex min-h-0">
          <div className="w-[22px] shrink-0 flex flex-col bg-[#2d3644] border-r-2 border-[#2d3644] text-[11px] text-[#c8cdd5]">
            <div className="mt-[4px] h-[320px] bg-[#3b4453] flex items-center justify-center">
              <span className="[writing-mode:vertical-rl] rotate-180 whitespace-nowrap">Layer Properties Manager</span>
            </div>
            <div className="mt-[4px] flex-1 bg-[#3b4453] flex items-center justify-center pt-[10px]">
              <span className="[writing-mode:vertical-rl] rotate-180 whitespace-nowrap">Properties</span>
            </div>
          </div>
          <div className="relative flex-1 bg-[#8a8a8a] overflow-hidden">
            {/* floating command line */}
            <div className="absolute left-[523px] top-[621px] w-[479px] h-[15px] bg-[#3b4453] rounded-tl-[3px] flex items-center text-[#c8cdd5]">
              <span className="ml-[5px] text-[10px] leading-none">⋮</span>
              <X size={11} className="ml-[2px]" />
              <svg width="11" height="11" viewBox="0 0 11 11" className="ml-[8px]"><path d="M1 10l5-5a3 3 0 014-4L8 3l1 1 1-1a3 3 0 01-4 3l-4 5z" fill="#d5d9df" /></svg>
              <div className="ml-[4px] flex-1 h-[15px] bg-[#d8d8d8] flex items-center text-[11px] text-[#555] pl-[3px]">
                <span className="w-[14px] h-[9px] mt-[4px] border border-[#555] border-t-[3px]" />
                <span className="ml-[3px] mt-[3px] tracking-[1.5px]">Type a command</span>
              </div>
            </div>
            <Drawing />
          </div>
        </div>
      </div>

      {/* annotation laid over the screenshot */}
      <div className="absolute left-[682px] top-[293px] w-[565px] h-[123px] bg-white border-2 border-[#ff0000] pl-[9px] pt-[3px] text-[45.6px] leading-[53px] text-[#ff0000] font-['Liberation_Sans',sans-serif] whitespace-nowrap">
        Copy the Sprinkler
        <br />
        Summary up to your paper
      </div>
      <div className="absolute left-[963px] top-[416px] w-[2px] h-[310px] bg-[#ff0000]" />
      <svg width="180" height="90" viewBox="0 0 180 90" className="absolute left-[515px] top-[412px]">
        <path d="M167 2L18 71" stroke="#00ff00" strokeWidth="2.5" />
        <path d="M3 78L15 60l9 19z" fill="#00ff00" />
      </svg>
    </div>
  );
}
